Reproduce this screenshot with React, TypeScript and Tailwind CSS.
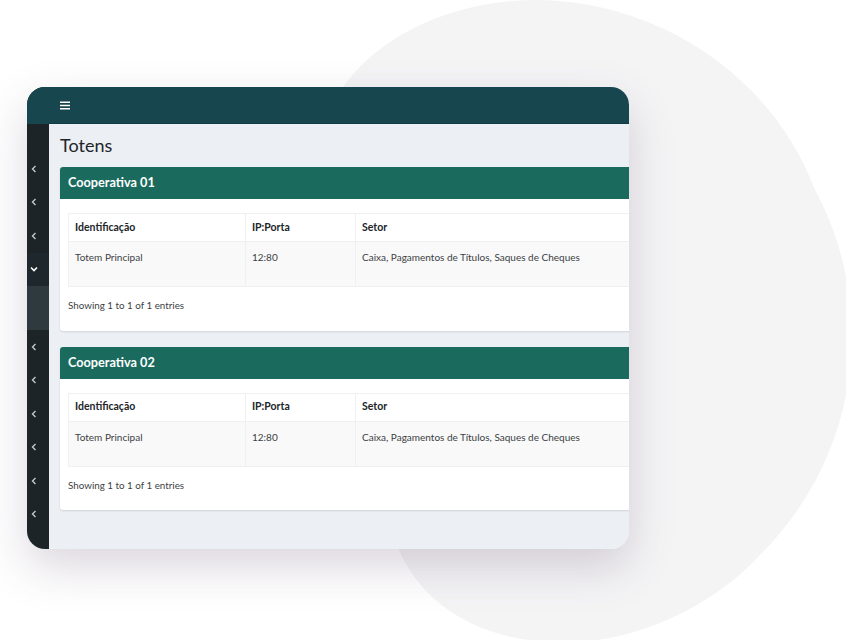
import React from "react"

const rows = [
    { id: "Totem Principal", ip: "12:80", setor: "Caixa, Pagamentos de Títulos, Saques de Cheques" },
]

const cooperativas = ["Cooperativa 01", "Cooperativa 02"]

function Chevron({ down = false }: { down?: boolean }) {
    if (down) {
        return (
            <svg width="8" height="6" viewBox="0 0 8 6" className="text-white">
                <polyline points="1,1.5 4,4.5 7,1.5" fill="none" stroke="currentColor" strokeWidth="1.6" />
            </svg>
        )
    }
    return (
        <svg width="6" height="8" viewBox="0 0 6 8" className="text-[#c2c7d0]">
            <polyline points="4.5,1 1.5,4 4.5,7" fill="none" stroke="currentColor" strokeWidth="1.4" />
        </svg>
    )
}

function Sidebar() {
    const before = [0, 1, 2]
    const after = [0, 1, 2, 3, 4, 5]
    return (
        <div className="w-[22px] shrink-0 flex flex-col bg-[#1c2427]">
            <div className="h-[37px] bg-[#17464f] shrink-0" />
            <div className="h-[28px] shrink-0" />
            {before.map((i) => (
                <div key={i} className="h-[33.5px] flex items-center pl-[4px]">
                    <Chevron />
                </div>
            ))}
            <div className="h-[33.5px] flex items-center pl-[3px] bg-[#1e272b]">
                <Chevron down />
            </div>
            <div className="h-[44px] bg-[#2f3a3f] shrink-0" />
            {after.map((i) => (
                <div key={i} className="h-[33.5px] flex items-center pl-[4px]">
                    <Chevron />
                </div>
            ))}
        </div>
    )
}

function TotemCard({ title }: { title: string }) {
    return (
        <div className="w-[720px] shrink-0 bg-white rounded-[3px] shadow-[0_1px_2px_rgba(0,0,0,0.12)]">
            <div className="h-[32px] bg-[#1a6b5e] rounded-t-[3px] flex items-center px-[8px]">
                <h3 className="text-white text-[12.7px] font-bold">{title}</h3>
            </div>
            <div className="px-[8px] pt-[14px] pb-[18px]">
                <table className="w-full border-collapse text-[10px] text-[#212529]">
                    <thead>
                        <tr className="h-[28px] border border-[#eef0f2]">
                            <th className="w-[177px] text-left text-[10.5px] font-bold px-[6px] border-r border-[#eef0f2]">Identificação</th>
                            <th className="w-[110px] text-left text-[10.5px] font-bold px-[6px] border-r border-[#eef0f2]">IP:Porta</th>
                            <th className="text-left text-[10.5px] font-bold px-[6px]">Setor</th>
                        </tr>
                    </thead>
                    <tbody>
                        {rows.map((r) => (
                            <tr key={r.id} className="h-[45px] bg-[#f9f9f9] border border-[#eef0f2] text-[#3b3f44]">
                                <td className="align-top pt-[8px] px-[6px] border-r border-[#eef0f2]">{r.id}</td>
                                <td className="align-top pt-[8px] px-[6px] border-r border-[#eef0f2]">{r.ip}</td>
                                <td className="align-top pt-[8px] px-[6px]">{r.setor}</td>
                            </tr>
                        ))}
                    </tbody>
                </table>
                <p className="mt-[11px] text-[9.8px] text-[#3b3f44]">Showing 1 to 1 of 1 entries</p>
            </div>
        </div>
    )
}

export default function App() {
    return (
        <div
            className="relative w-[846px] h-[640px] overflow-hidden bg-white"
            style={{ fontFamily: "Lato, 'Noto Sans', sans-serif" }}
        >
            {/* background blob */}
            <svg className="absolute inset-0" width="846" height="640" viewBox="0 0 846 640">
                <path
                    d="M 530 0 C 650 -2 770 70 815 190 C 875 300 865 450 760 555 C 700 620 610 648 545 642 C 470 636 420 600 398 548 C 330 420 320 250 343 87 C 380 35 450 2 530 0 Z"
                    fill="#f4f4f5"
                />
            </svg>

            <div className="relative pl-[27px] pt-[87px]">
                <div className="w-[602px] h-[462px] rounded-[18px] overflow-hidden flex shadow-[0_18px_45px_rgba(90,70,100,0.22)]">
                    <Sidebar />
                    <div className="flex-1 flex flex-col min-w-0">
                        <header className="h-[37px] shrink-0 bg-[#17464f] border-b border-[#123c43] flex items-center pl-[11px]">
                            <svg width="10" height="9" viewBox="0 0 10 9" className="text-white">
                                <rect x="0" y="0.5" width="10" height="1.5" fill="currentColor" />
                                <rect x="0" y="3.75" width="10" height="1.5" fill="currentColor" />
                                <rect x="0" y="7" width="10" height="1.5" fill="currentColor" />
                            </svg>
                        </header>
                        <main className="flex-1 bg-[#eceff4] px-[11px] pt-[10px] overflow-hidden">
                            <h1 className="text-[18px] leading-[22px] text-[#212529] mb-[11px]">Totens</h1>
                            <div className="flex flex-col gap-[16px]">
                                {cooperativas.map((c) => (
                                    <TotemCard key={c} title={c} />
                                ))}
                            </div>
                        </main>
                    </div>
                </div>
            </div>
        </div>
    )
}
